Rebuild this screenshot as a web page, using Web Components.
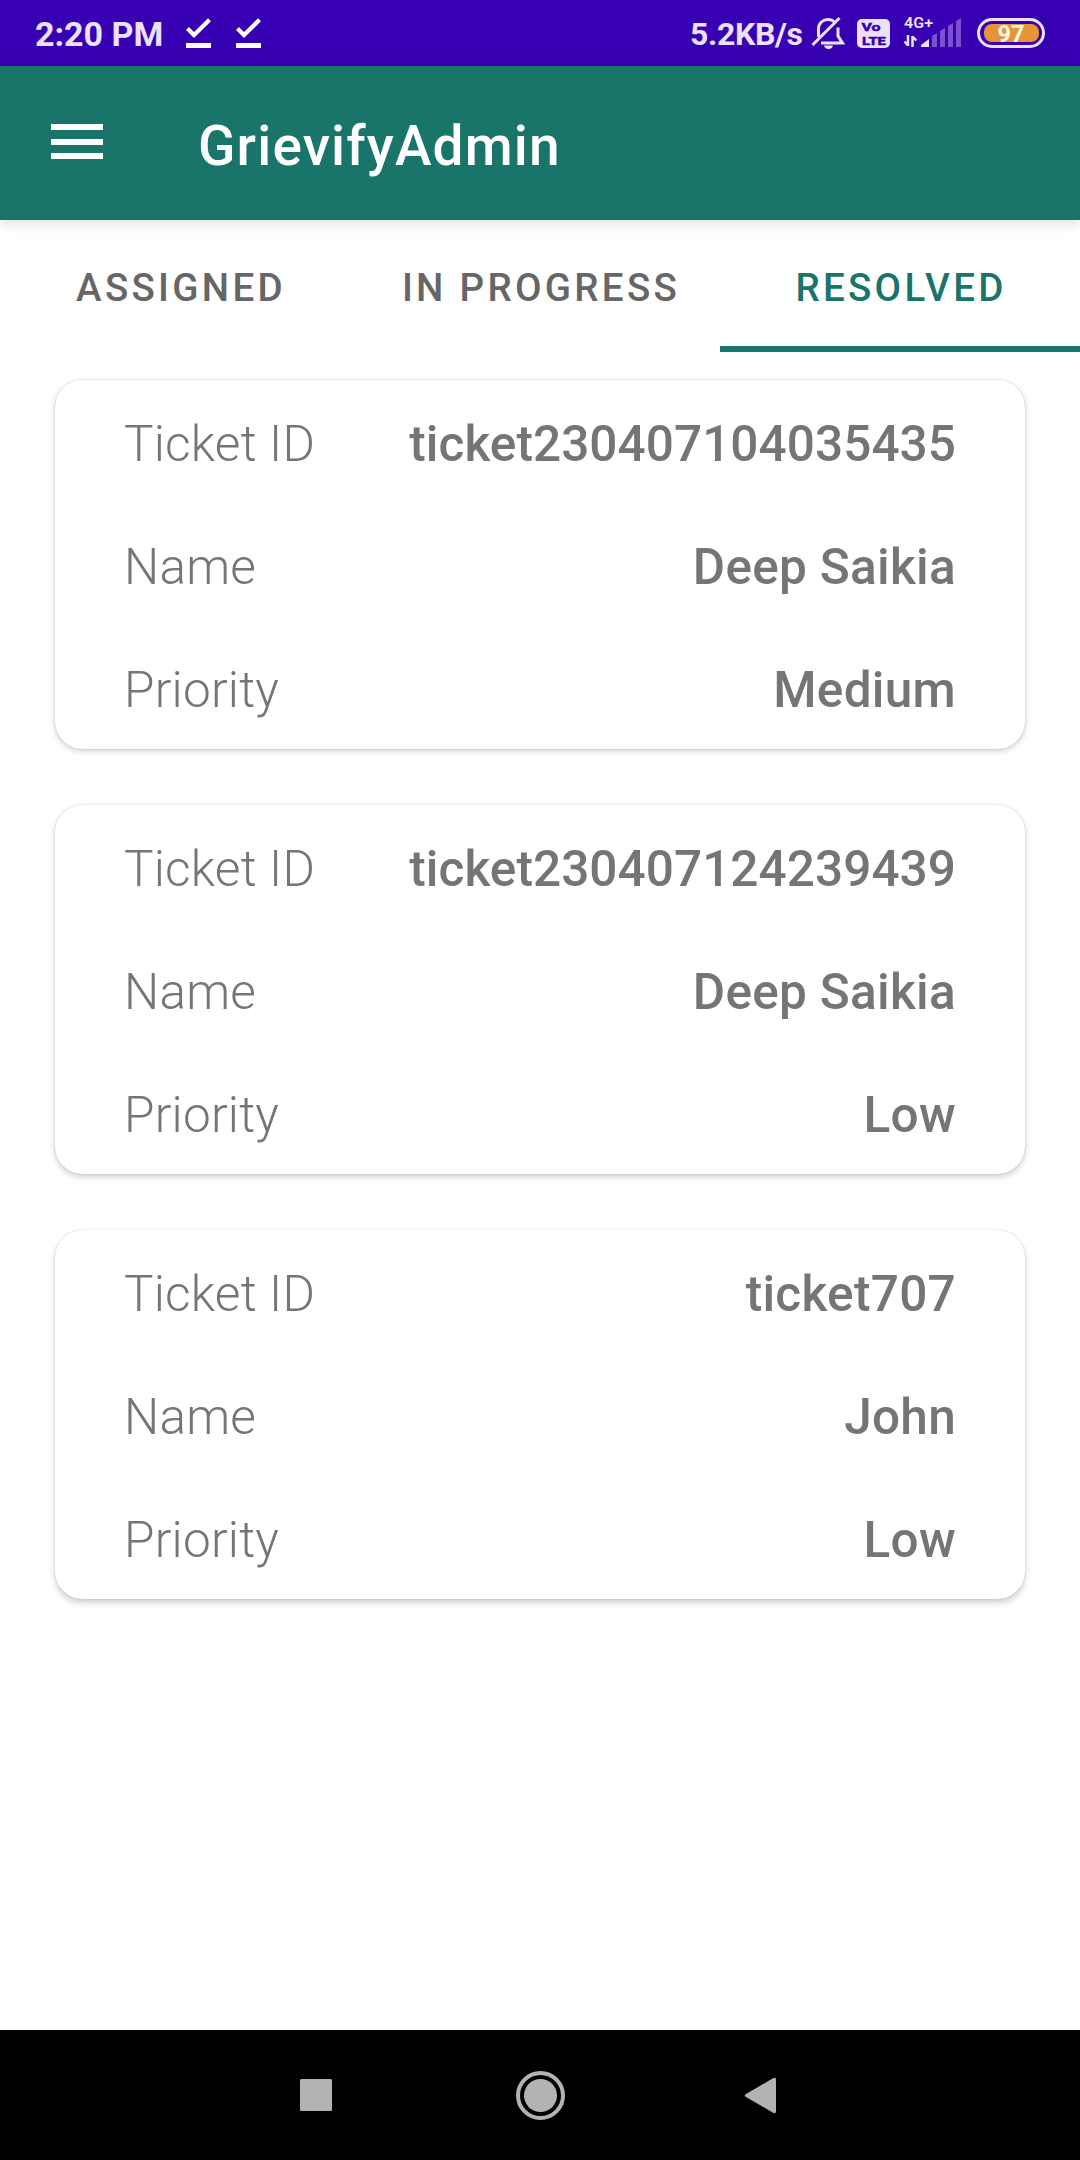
<!DOCTYPE html>
<html lang="en"><head><meta charset="utf-8"><title>GrievifyAdmin</title>
<style>
html,body{margin:0;height:100%;background:#fff}
body{font-family:Roboto,"Liberation Sans",sans-serif}
</style></head><body>
<grievify-app></grievify-app>
<script>
const define=(name,html)=>customElements.define(name,class extends HTMLElement{
  constructor(){super();this.attachShadow({mode:'open'}).innerHTML=html;}
});

define('check-icon',`<style>:host{display:block;width:25px;height:31px}svg{display:block}</style>
<svg width="25" height="31" viewBox="0 0 25 31"><path d="M1.5 10.5 8 17 23.5 1.8" fill="none" stroke="#fff" stroke-width="4.2"/><path d="M0 25h25v5H0z" fill="#fff"/></svg>`);

define('status-bar',`<style>
:host{display:flex;justify-content:space-between;height:66px;box-sizing:border-box;padding:0 35px;background:#3700b3;color:#ebe1fb}
.side{display:flex;align-items:flex-start}
.time{font-size:34px;line-height:40px;padding-top:14px;width:151px;font-weight:700;white-space:nowrap}
check-icon{margin:18px 25px 0 0}
.speed{font-size:32px;line-height:38px;padding-top:15px;white-space:nowrap;width:120px;font-weight:700;letter-spacing:-.35px}
svg{display:block}
</style>
<div class="side"><span class="time">2:20 PM</span><check-icon></check-icon><check-icon></check-icon></div>
<div class="side"><span class="speed">5.2KB/s</span>
<svg width="235" height="66" viewBox="810 0 235 66" font-family="Roboto, sans-serif">
<g fill="none" stroke="#ebe1fb" stroke-width="3"><path d="M812.5 45 839.5 18"/><path d="M818.5 37V29C818.5 23 823 19.500 828 19.500 831 19.500 833 20.500 834.500 22M838 27.500V36L842.500 43H821"/></g>
<path d="M824 45.500h9q-1 3.500-4.500 3.500t-4.500-3.500z" fill="#ebe1fb"/>
<rect x="857" y="19" width="33" height="29" rx="5" fill="#ebe1fb"/>
<g fill="#3700b3" stroke="#3700b3" stroke-width=".5" font-size="11.500" font-weight="700"><text x="861.500" y="31.200" textLength="19" lengthAdjust="spacingAndGlyphs">Vo</text><text x="862" y="44.800" textLength="24" lengthAdjust="spacingAndGlyphs">LTE</text></g>
<text x="904" y="28" font-size="15.500" font-weight="600" fill="#ebe1fb" textLength="29" lengthAdjust="spacingAndGlyphs">4G+</text>
<g fill="none" stroke="#ebe1fb" stroke-width="2.500"><path d="M908 35V46M904.500 41.500 908 45.500M912.500 47V36M916.300 40.500 912.500 36.500"/></g>
<path d="M921 47V45L929 39V47z" fill="#ebe1fb"/>
<path d="M932 47V36l5-3V47zM940 47V31l5-3V47zM948 47V26l5-3V47zM956 47V21l5-3V47z" fill="#7c50d0"/>
<rect x="978.500" y="19.500" width="65" height="27" rx="13.500" fill="none" stroke="#ebe1fb" stroke-width="3"/>
<rect x="984" y="24" width="55" height="18" rx="8" fill="#e49534"/>
<text x="1011" y="41.500" text-anchor="middle" font-size="23.500" font-weight="700" fill="#fff5ea">97</text>
</svg></div>`);

define('app-bar',`<style>
:host{display:flex;align-items:flex-start;height:154px;box-sizing:border-box;padding-left:51px;background:#19756a;color:#fff;box-shadow:0 2px 12px rgba(0,0,0,.12),0 4px 20px rgba(0,0,0,.03);position:relative}
.menu{display:flex;flex-direction:column;gap:8.500px;width:52px;padding-top:58px}
.menu i{height:6px;background:#fff}
h1{margin:0 0 0 95px;padding-top:48px;font-size:55px;line-height:64px;font-weight:500;letter-spacing:1.15px}
</style><div class="menu"><i></i><i></i><i></i></div><h1><slot></slot></h1>`);

define('status-tab',`<style>
:host{flex:1;display:flex;flex-direction:column;height:132px;box-sizing:border-box;text-align:center;color:#666;border-bottom:6px solid transparent;font-size:38.500px;font-weight:500;line-height:46px;letter-spacing:3.3px;padding:45px 0 0 2px;white-space:nowrap}
:host([selected]){color:#19756a;border-color:#19756a}
</style><slot></slot>`);

define('tab-strip',`<style>:host{display:flex}</style><slot></slot>`);

define('ticket-row',`<style>
:host{display:flex;justify-content:space-between;align-items:center;height:123px;box-sizing:border-box;padding:4px 69px 0;color:#757575;font-size:49.500px;line-height:58px}
.label{font-weight:300;letter-spacing:.22px}
.value{font-weight:500;letter-spacing:.3px}
:host([wide]) .value{letter-spacing:.07px}
</style><span class="label"><slot name="label"></slot></span><span class="value"><slot></slot></span>`);

define('ticket-card',`<style>
:host{display:block;border-radius:27.500px;background:#fff;box-shadow:0 0 2px rgba(0,0,0,.16),0 var(--drop,3px) 6px rgba(0,0,0,.19)}
</style><slot></slot>`);

define('nav-bar',`<style>
:host{display:flex;height:130px;background:#000}
svg{display:block;margin:auto}
</style><svg width="1080" height="130" viewBox="0 0 1080 130" fill="#b3b3b3"><rect x="300" y="49" width="32" height="32" rx="1.500"/><circle cx="540.500" cy="65.500" r="16.500"/><circle cx="540.500" cy="65.500" r="22.500" fill="none" stroke="#b3b3b3" stroke-width="4"/><path d="M746 64 773.500 48Q776 47 776 49.500V81.500Q776 84 773.500 83L746 67Q743.500 65.500 746 64z"/></svg>`);

const tickets=[['ticket230407104035435','Deep Saikia','Medium'],['ticket230407124239439','Deep Saikia','Low'],['ticket707','John','Low']];
define('grievify-app',`<style>
:host{display:flex;flex-direction:column;width:1080px;height:2160px;overflow:hidden;background:#fff}
main{flex:1;display:flex;flex-direction:column;gap:56px;padding:28px 55px 0}
</style>
<status-bar></status-bar><app-bar>GrievifyAdmin</app-bar>
<tab-strip><status-tab>ASSIGNED</status-tab><status-tab>IN PROGRESS</status-tab><status-tab selected>RESOLVED</status-tab></tab-strip>
<main>${tickets.map((t,n)=>`<ticket-card style="--drop:${2+n}px">${['Ticket ID','Name','Priority'].map((l,i)=>`<ticket-row${t[i].length>15?' wide':''}><span slot="label">${l}</span>${t[i]}</ticket-row>`).join('')}</ticket-card>`).join('')}</main>
<nav-bar></nav-bar>`);
</script></body></html>
